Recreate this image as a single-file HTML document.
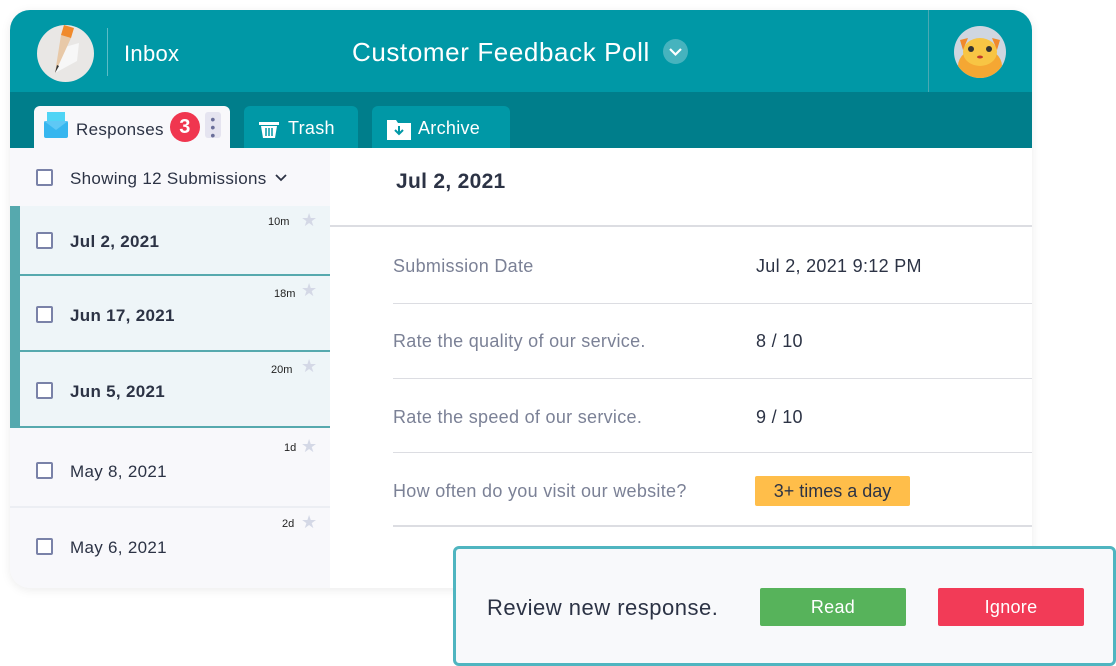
<!DOCTYPE html>
<html><head><style>
*{box-sizing:border-box;margin:0;padding:0}
body{width:1116px;height:666px;background:#fff;font-family:"Liberation Sans",sans-serif;position:relative;overflow:hidden;color:#2c3345;letter-spacing:0.3px}
.card{position:absolute;left:10px;top:10px;width:1022px;height:578px;border-radius:20px;overflow:hidden;background:#fff;box-shadow:0 2px 10px rgba(0,0,0,.08)}
.hdr{position:absolute;left:0;top:0;width:1022px;height:82px;background:#0098a6}
.tabs{position:absolute;left:0;top:82px;width:1022px;height:56px;background:#007e8b}
.abs{position:absolute}
.tab{position:absolute;top:14px;height:42px;border-radius:6px 6px 0 0;background:#0098a6;color:#fff;font-size:18px}
.left{position:absolute;left:0;top:138px;width:320px;height:440px;background:#f8f8fb}
.row{position:absolute;left:0;width:320px}
.row.sel{background:#eef5f8;border-bottom:2px solid #56a9ae}
.bar{position:absolute;left:0;width:10px;background:#56a9ae}
.cb{position:absolute;left:26px;width:17px;height:17px;border:2px solid #7a82a8;border-radius:2px;background:#fff}
.d{position:absolute;left:60px;font-size:17px}
.t{position:absolute;font-size:11px;color:#222;letter-spacing:0}
.st{position:absolute;left:291px;color:#d4d8e6;font-size:18px}
.lbl{position:absolute;left:383px;font-size:18px;color:#7b8196}
.val{position:absolute;left:746px;font-size:18px;color:#2c3345}
.ln{position:absolute;left:383px;width:639px;height:1px;background:#dcdde2}
</style></head><body>
<div class="card">
 <div class="hdr">
  <div class="abs" style="left:27px;top:15px;width:57px;height:57px;border-radius:50%;background:#e9e7e5;overflow:hidden">
   <svg width="57" height="57"><polygon points="18,48 40,36 42,18 28,22" fill="#f7f7f7"/><polygon points="18,48 24,10 34,13" fill="#e8c9a8"/><polygon points="24,10 34,13 37,3 27,0" fill="#f08a2c"/><polygon points="18,48 20,40 22,41" fill="#333"/></svg>
  </div>
  <div class="abs" style="left:97px;top:18px;width:1px;height:48px;background:#5cbcc6"></div>
  <div class="abs" style="left:114px;top:31px;color:#fff;font-size:22px">Inbox</div>
  <div class="abs" style="left:342px;top:27px;color:#fff;font-size:26px;letter-spacing:0.6px">Customer Feedback Poll</div>
  <div class="abs" style="left:653px;top:29px;width:25px;height:25px;border-radius:50%;background:#46b3be"><svg width="25" height="25"><path d="M7 10l5.5 5.5L18 10" stroke="#fff" stroke-width="2.2" fill="none"/></svg></div>
  <div class="abs" style="left:918px;top:0;width:1px;height:82px;background:#4aa9b3"></div>
  <div class="abs" style="left:944px;top:16px;width:52px;height:52px;border-radius:50%;background:#cfd6e0;overflow:hidden">
   <svg width="52" height="52"><ellipse cx="26" cy="40" rx="22" ry="18" fill="#f5a733"/><ellipse cx="26" cy="26" rx="17" ry="14" fill="#f8c544"/><polygon points="6,14 14,12 9,24" fill="#f08a2c"/><polygon points="46,14 38,12 43,24" fill="#f08a2c"/><circle cx="17" cy="23" r="3" fill="#333"/><circle cx="35" cy="23" r="3" fill="#333"/><ellipse cx="26" cy="31" rx="3" ry="1.5" fill="#c0392b"/></svg>
  </div>
 </div>
 <div class="tabs">
  <div class="tab" style="left:24px;width:196px;background:#f8f8fb;color:#2c3345;height:42px">
   <svg class="abs" style="left:10px;top:6px" width="24" height="26"><rect x="3" y="0" width="18" height="12" fill="#4fd4f5"/><rect x="0" y="9" width="24" height="17" rx="2" fill="#36b6ef"/><path d="M0 9l12 9 12-9" fill="#5ec8f5"/></svg>
   <span class="abs" style="left:42px;top:14px;font-size:17px">Responses</span>
   <div class="abs" style="left:136px;top:6px;width:30px;height:30px;border-radius:50%;background:#f0364f;color:#fff;font-size:20px;font-weight:bold;text-align:center;line-height:30px">3</div>
   <div class="abs" style="left:171px;top:6px;width:16px;height:26px;border-radius:3px;background:#e5e4f0;color:#6b6f9a;font-size:14px;line-height:8px;text-align:center;padding-top:3px">•<br>•<br>•</div>
  </div>
  <div class="tab" style="left:234px;width:114px">
   <svg class="abs" style="left:15px;top:14px" width="20" height="18"><rect x="0" y="2" width="20" height="3" fill="#fff"/><path d="M2 6h16l-2 12H4z" fill="#fff"/><path d="M7 8v8M10 8v8M13 8v8" stroke="#0098a6" stroke-width="1.5"/></svg>
   <span class="abs" style="left:44px;top:12px">Trash</span>
  </div>
  <div class="tab" style="left:362px;width:138px">
   <svg class="abs" style="left:15px;top:12px" width="24" height="22"><path d="M0 2h9l2 3h13v17H0z" fill="#fff"/><path d="M12 8v8M8 12l4 4 4-4" stroke="#0098a6" stroke-width="2" fill="none"/></svg>
   <span class="abs" style="left:46px;top:12px">Archive</span>
  </div>
 </div>
 <div class="left">
  <div class="cb" style="top:21px"></div>
  <div class="abs" style="left:60px;top:21px;font-size:17px">Showing 12 Submissions</div>
  <svg class="abs" style="left:264px;top:25px" width="14" height="10"><path d="M2 2l5 5 5-5" stroke="#2c3345" stroke-width="1.8" fill="none"/></svg>
  <div class="row sel" style="top:58px;height:70px"><div class="cb" style="top:26px"></div><div class="d" style="top:26px;font-weight:bold">Jul 2, 2021</div><div class="t" style="left:258px;top:10px">10m</div><div class="st" style="top:4px">★</div></div>
  <div class="row sel" style="top:128px;height:76px"><div class="cb" style="top:30px"></div><div class="d" style="top:30px;font-weight:bold">Jun 17, 2021</div><div class="t" style="left:264px;top:12px">18m</div><div class="st" style="top:4px">★</div></div>
  <div class="row sel" style="top:204px;height:76px"><div class="cb" style="top:30px"></div><div class="d" style="top:30px;font-weight:bold">Jun 5, 2021</div><div class="t" style="left:261px;top:12px">20m</div><div class="st" style="top:4px">★</div></div>
  <div class="row" style="top:280px;height:80px;border-bottom:2px solid #eceef3"><div class="cb" style="top:34px"></div><div class="d" style="top:34px">May 8, 2021</div><div class="t" style="left:274px;top:14px">1d</div><div class="st" style="top:8px">★</div></div>
  <div class="row" style="top:360px;height:80px"><div class="cb" style="top:30px"></div><div class="d" style="top:30px">May 6, 2021</div><div class="t" style="left:272px;top:10px">2d</div><div class="st" style="top:4px">★</div></div>
  <div class="bar" style="top:58px;height:222px"></div>
 </div>
 <div class="abs" style="left:386px;top:160px;font-size:21px;font-weight:bold">Jul 2, 2021</div>
 <div class="abs" style="left:320px;top:215px;width:702px;height:2px;background:#dcdde2"></div>
 <div class="lbl" style="top:246px">Submission Date</div><div class="val" style="top:246px">Jul 2, 2021 9:12 PM</div><div class="ln" style="top:293px"></div>
 <div class="lbl" style="top:321px">Rate the quality of our service.</div><div class="val" style="top:321px">8 / 10</div><div class="ln" style="top:368px"></div>
 <div class="lbl" style="top:397px">Rate the speed of our service.</div><div class="val" style="top:397px">9 / 10</div><div class="ln" style="top:442px"></div>
 <div class="lbl" style="top:471px">How often do you visit our website?</div>
 <div class="abs" style="left:745px;top:466px;width:155px;height:30px;background:#ffbe4a;border-radius:2px;font-size:18px;line-height:30px;text-align:center;letter-spacing:0">3+ times a day</div>
 <div class="ln" style="top:515px;height:2px"></div>
</div>
<div class="abs" style="left:453px;top:546px;width:663px;height:120px;border:3px solid #4fb5c0;border-radius:6px;background:#f8f9fb">
 <div class="abs" style="left:31px;top:46px;font-size:22px;letter-spacing:0.5px">Review new response.</div>
 <div class="abs" style="left:304px;top:39px;width:146px;height:38px;background:#57b35b;border-radius:2px;color:#fff;font-size:18px;text-align:center;line-height:38px">Read</div>
 <div class="abs" style="left:482px;top:39px;width:146px;height:38px;background:#f23b57;border-radius:2px;color:#fff;font-size:18px;text-align:center;line-height:38px">Ignore</div>
</div>
</body></html>
